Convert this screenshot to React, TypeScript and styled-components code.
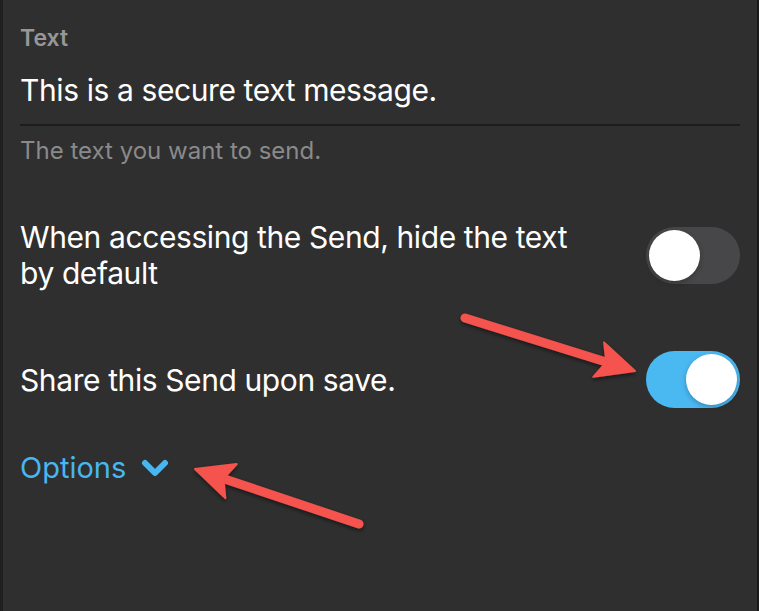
import React from 'react';
import styled, { createGlobalStyle } from 'styled-components';

const GlobalStyle = createGlobalStyle`
  html, body {
    margin: 0;
    padding: 0;
    background: #2f2f2f;
  }
  body {
    font-family: Inter, "Noto Sans", sans-serif;
    -webkit-font-smoothing: antialiased;
  }
`;

const Screen = styled.main`
  position: relative;
  width: 759px;
  height: 611px;
  box-sizing: border-box;
  background: #2f2f2f;
  border-left: 3px solid #1f1f1f;
  border-right: 2px solid #1a1a1a;
  padding: 24px 17px 0 17px;
  overflow: hidden;
  color: #ffffff;
`;

const FieldLabel = styled.div`
  font-size: 23px;
  font-weight: 600;
  color: #979797;
  line-height: 28px;
`;

const FieldValue = styled.div`
  font-size: 30px;
  line-height: 36px;
  letter-spacing: -0.4px;
  margin-top: 20px;
  padding-bottom: 16px;
  border-bottom: 2px solid #1c1c1c;
`;

const FieldHint = styled.div`
  font-size: 24px;
  line-height: 28px;
  letter-spacing: 0;
  color: #8a8a8a;
  margin-top: 11px;
`;

const ToggleRow = styled.div<{ top: number }>`
  display: flex;
  align-items: center;
  justify-content: space-between;
  margin-top: ${({ top }) => top}px;
`;

const RowText = styled.div`
  font-size: 30px;
  line-height: 36px;
  letter-spacing: -0.4px;
  max-width: 580px;
`;

const Track = styled.div<{ on: boolean }>`
  width: 94px;
  height: 57px;
  border-radius: 29px;
  background: ${({ on }) => (on ? '#4ab8f1' : '#474749')};
  display: flex;
  align-items: center;
  justify-content: ${({ on }) => (on ? 'flex-end' : 'flex-start')};
  padding: 0 3px;
  box-sizing: border-box;
  flex-shrink: 0;
`;

const Knob = styled.div`
  width: 51px;
  height: 51px;
  border-radius: 50%;
  background: #ffffff;
  box-shadow: 0 2px 5px rgba(0, 0, 0, 0.25);
`;

const OptionsLink = styled.div`
  display: flex;
  align-items: center;
  gap: 15px;
  margin-top: 42px;
  font-size: 29px;
  line-height: 36px;
  color: #48b6ef;
`;

const Annotations = styled.svg`
  position: absolute;
  left: 0;
  top: 0;
  pointer-events: none;
`;

function Toggle({ on }: { on: boolean }): JSX.Element {
  return (
    <Track on={on}>
      <Knob />
    </Track>
  );
}

function Arrow({ x1, y1, x2, y2 }: { x1: number; y1: number; x2: number; y2: number }): JSX.Element {
  const angle = Math.atan2(y2 - y1, x2 - x1);
  const head = 38;
  const half = 18;
  const bx = x2 - head * Math.cos(angle);
  const by = y2 - head * Math.sin(angle);
  const px = -Math.sin(angle);
  const py = Math.cos(angle);
  const pts = [
    `${x2},${y2}`,
    `${bx + px * half},${by + py * half}`,
    `${bx + 8 * Math.cos(angle)},${by + 8 * Math.sin(angle)}`,
    `${bx - px * half},${by - py * half}`,
  ].join(' ');
  return (
    <g filter="url(#shadow)">
      <line x1={x1} y1={y1} x2={bx + 6 * Math.cos(angle)} y2={by + 6 * Math.sin(angle)} stroke="#f5524d" strokeWidth={9} strokeLinecap="round" />
      <polygon points={pts} fill="#f5524d" strokeLinejoin="round" stroke="#f5524d" strokeWidth={2} />
    </g>
  );
}

function App(): JSX.Element {
  return (
    <>
      <GlobalStyle />
      <Screen>
        <FieldLabel>Text</FieldLabel>
        <FieldValue>This is a secure text message.</FieldValue>
        <FieldHint>The text you want to send.</FieldHint>
        <ToggleRow top={54}>
          <RowText>When accessing the Send, hide the text by default</RowText>
          <Toggle on={false} />
        </ToggleRow>
        <ToggleRow top={60}>
          <RowText>Share this Send upon save.</RowText>
          <Toggle on />
        </ToggleRow>
        <OptionsLink>
          Options
          <svg width="28" height="18" viewBox="0 0 28 18">
            <polyline points="4,4 14,14 24,4" fill="none" stroke="#48b6ef" strokeWidth={6} strokeLinecap="round" strokeLinejoin="round" />
          </svg>
        </OptionsLink>
        <Annotations width="759" height="611" viewBox="0 0 759 611">
          <defs>
            <filter id="shadow" x="-20%" y="-20%" width="140%" height="140%">
              <feDropShadow dx="0" dy="2" stdDeviation="2" floodColor="#000" floodOpacity="0.5" />
            </filter>
          </defs>
          <Arrow x1={462} y1={318} x2={632} y2={371} />
          <Arrow x1={356} y1={524} x2={192} y2={469} />
        </Annotations>
      </Screen>
    </>
  );
}

export default App;
